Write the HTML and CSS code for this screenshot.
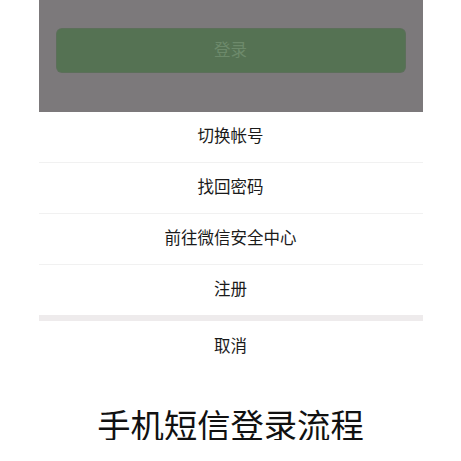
FILE: index.html
```html
<!DOCTYPE html>
<html lang="zh-CN">
<head>
  <meta charset="UTF-8">
  <title>手机短信登录流程</title>
  <link rel="stylesheet" href="styles.css">
</head>
<body>
  <div class="phone">
    <!-- 遮罩下的登录页 -->
    <div class="mask">
      <div class="login-button">登录</div>
    </div>
    <!-- 底部菜单 -->
    <div class="action-sheet">
      <div class="action-item">切换帐号</div>
      <div class="action-item">找回密码</div>
      <div class="action-item">前往微信安全中心</div>
      <div class="action-item last">注册</div>
      <div class="action-gap"></div>
      <div class="action-item cancel">取消</div>
    </div>
  </div>
  <h1 class="caption">手机短信登录流程</h1>
</body>
</html>
```
FILE: styles.css
```css
body {
  margin: 0;
  padding: 0;
  background-color: #ffffff;
  font-family: "Noto Sans CJK SC", "Noto Sans", sans-serif;
  color: #1a1a1a;
}

.phone {
  width: 384px;
  margin: 0 auto;
}

.mask {
  height: 112px;
  padding: 29px 18px 0;
  box-sizing: border-box;
  background-color: #7c797b;
}
.login-button {
  height: 43px;
  padding-bottom: 3px;
  box-sizing: border-box;
  border-radius: 5px;
  background-color: #557253;
  box-shadow: 0 0 0 1px #5c6f5a;
  color: #6d8a6b;
  font-size: 16.5px;
  display: flex;
  align-items: center;
  justify-content: center;
}

.action-sheet {
  display: flex;
  flex-direction: column;
}
.action-item {
  height: 50px;
  padding-bottom: 4px;
  box-sizing: content-box;
  border-bottom: 1px solid #f1f1f1;
  display: flex;
  align-items: center;
  justify-content: center;
  font-size: 16.5px;
}
.action-item {
  height: 46px;
}
.action-item.last {
  border-bottom: none;
}
.action-item.cancel {
  border-bottom: none;
  height: 47px;
}
.action-gap {
  height: 6px;
  background-color: #eeebec;
}

.caption {
  margin: 35px 0 0;
  text-align: center;
  font-size: 33.3px;
  font-weight: 400;
  line-height: 1;
  color: #111111;
}
```
